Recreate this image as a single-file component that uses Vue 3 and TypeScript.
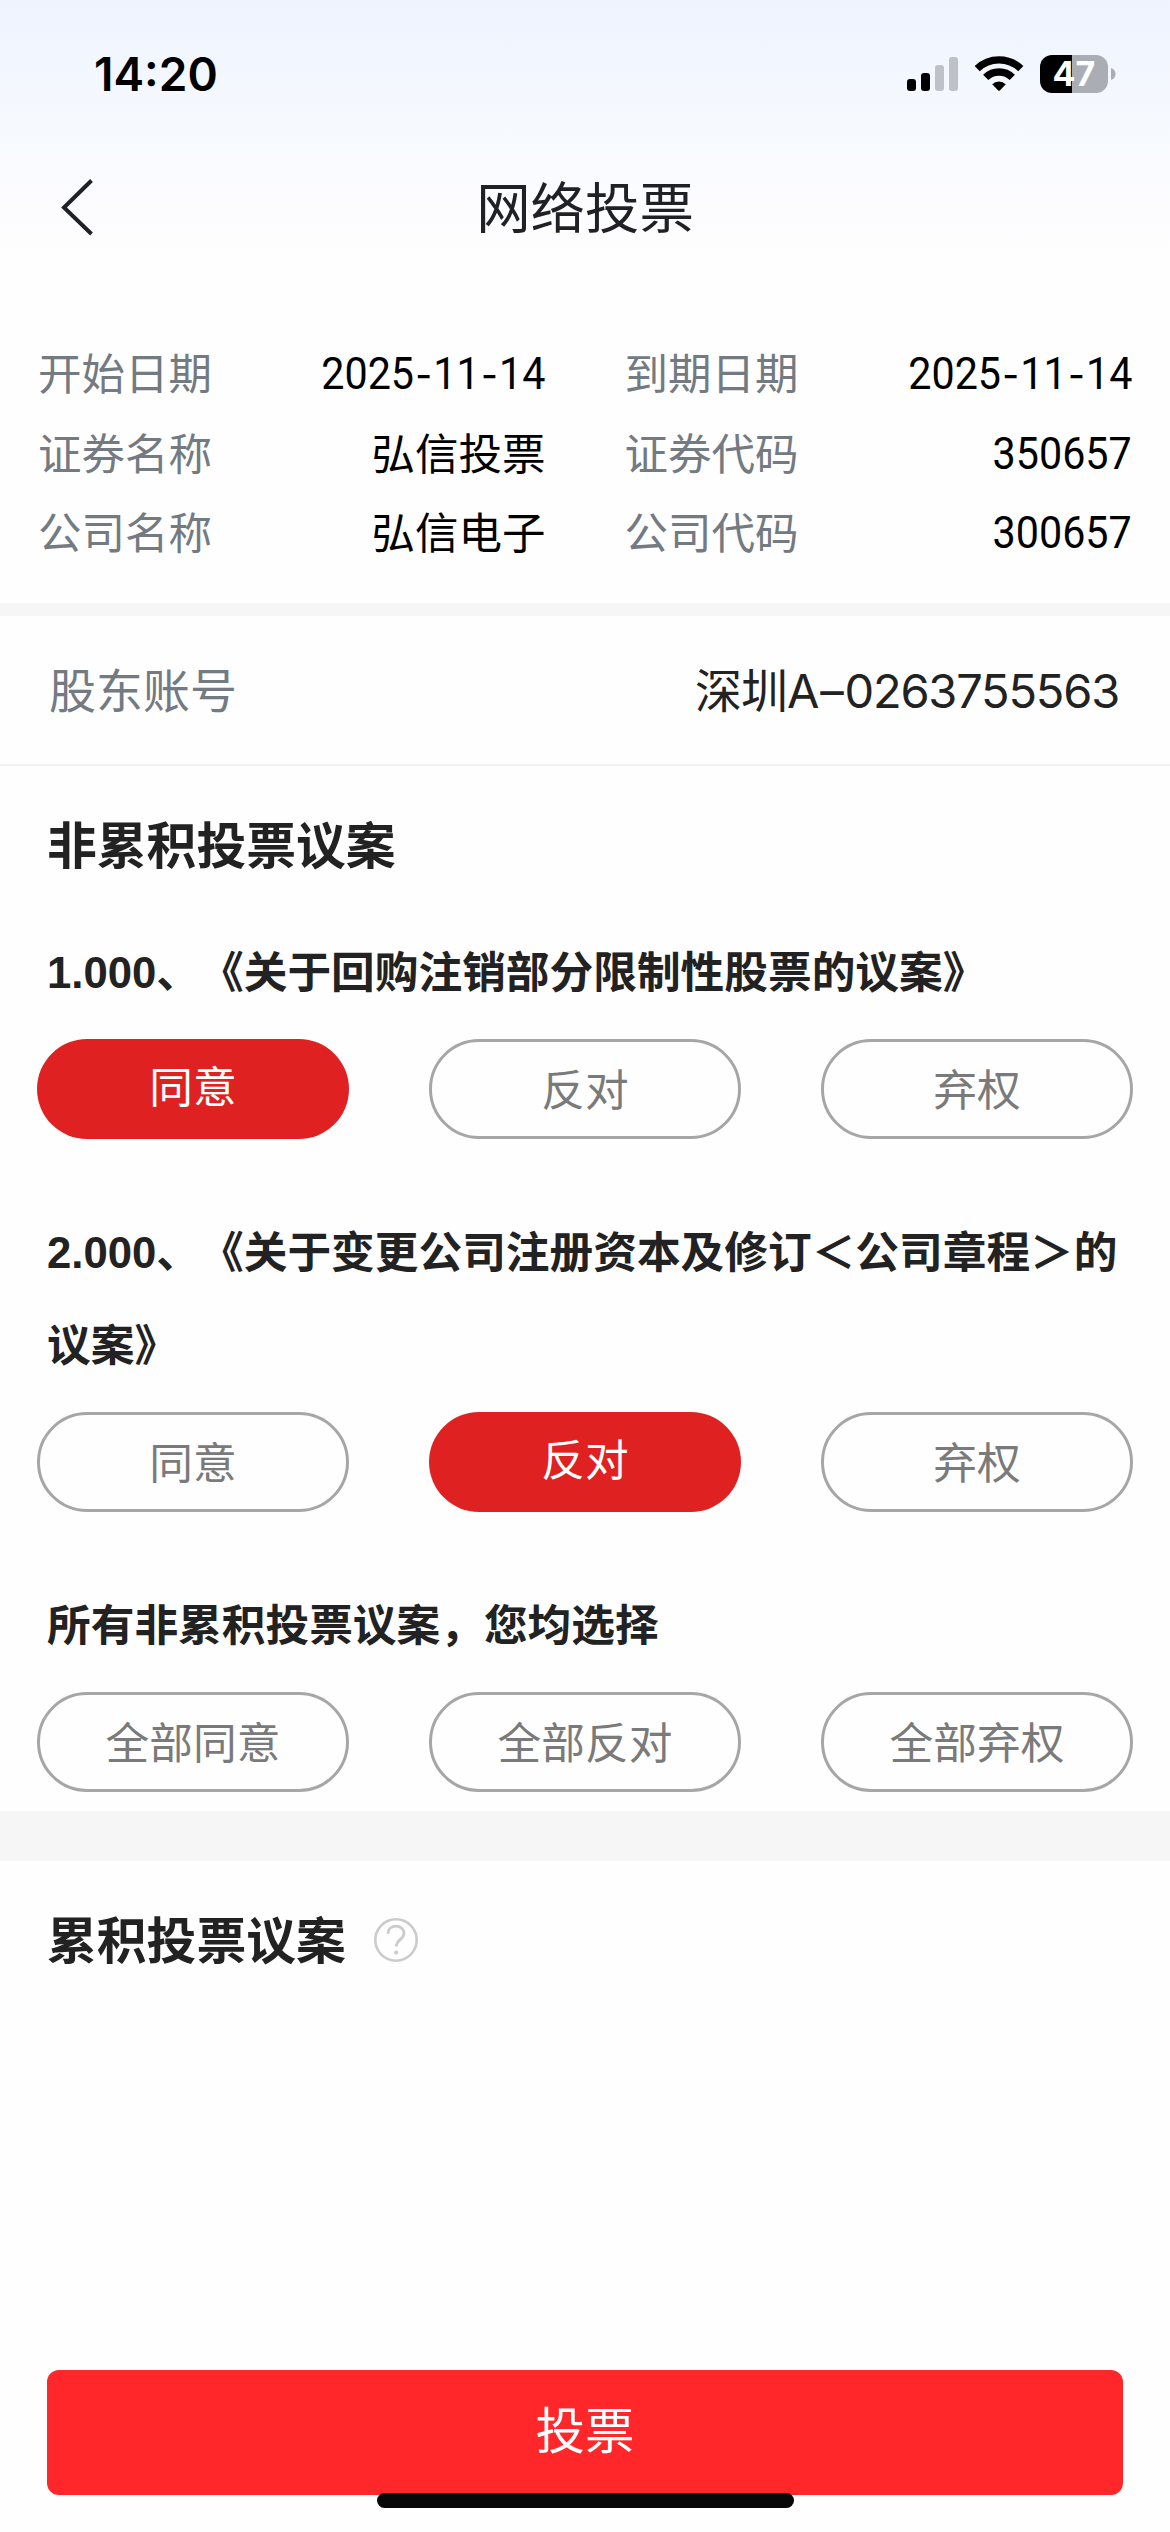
<script setup lang="ts">
import { reactive } from 'vue'

interface InfoItem {
  label: string
  value: string
  numeric?: boolean
}

interface Proposal {
  id: number
  title: string
  choice: string
}

const infoItems: InfoItem[] = [
  { label: '开始日期', value: '2025-11-14', numeric: true },
  { label: '到期日期', value: '2025-11-14', numeric: true },
  { label: '证券名称', value: '弘信投票' },
  { label: '证券代码', value: '350657', numeric: true },
  { label: '公司名称', value: '弘信电子' },
  { label: '公司代码', value: '300657', numeric: true },
]

const choices: string[] = ['同意', '反对', '弃权']

const proposals = reactive<Proposal[]>([
  { id: 1, title: '1.000、《关于回购注销部分限制性股票的议案》', choice: '同意' },
  { id: 2, title: '2.000、《关于变更公司注册资本及修订＜公司章程＞的议案》', choice: '反对' },
])

function pickAll(choice: string): void {
  proposals.forEach((p) => (p.choice = choice))
}
</script>

<template>
  <div class="page">
    <header class="top">
      <div class="status">
        <span class="time">14:20</span>
        <div class="indicators">
          <svg class="signal" width="51" height="38" viewBox="0 0 51 38">
            <rect x="0" y="24" width="9" height="12" rx="3" fill="#000" />
            <rect x="14" y="18" width="9" height="18" rx="3" fill="#000" />
            <rect x="28" y="10" width="9" height="26" rx="3" fill="#bfc1c8" />
            <rect x="42" y="2" width="9" height="34" rx="3" fill="#bfc1c8" />
          </svg>
          <svg class="wifi" width="50" height="38" viewBox="0 0 50 38">
            <path d="M3.2 13.6A31.5 31.5 0 0 1 46.8 13.6" fill="none" stroke="#000" stroke-width="7.4" />
            <path d="M11.7 22.4A19 19 0 0 1 38.3 22.4" fill="none" stroke="#000" stroke-width="7.4" />
            <path d="M18.2 29.2A10 10 0 0 1 31.8 29.2L25.8 35.4Q25 36.2 24.2 35.4Z" fill="#000" />
          </svg>
          <div class="battery"><span>47</span></div>
          <svg class="cap" width="5" height="12" viewBox="0 0 5 12">
            <path d="M0 0Q4.5 1.6 4.5 6T0 12Z" fill="#abadb5" />
          </svg>
        </div>
      </div>
      <div class="nav">
        <svg class="back" width="36" height="60" viewBox="0 0 36 60">
          <path d="M32.5 3.5L5 30.5L32.5 57" fill="none" stroke="#202126" stroke-width="4" />
        </svg>
        <h1>网络投票</h1>
      </div>
    </header>

    <section class="info">
      <div v-for="item in infoItems" :key="item.label" class="info-item">
        <span class="info-label">{{ item.label }}</span>
        <span v-if="item.numeric" class="info-number">
          <template v-for="(part, i) in item.value.split('-')" :key="i"><i v-if="i > 0">-</i>{{ part }}</template>
        </span>
        <span v-else class="info-value">{{ item.value }}</span>
      </div>
    </section>

    <section class="account">
      <span class="account-label">股东账号</span>
      <span class="account-value"><span class="market">深圳</span><span class="dash">A–</span><span class="account-number">0263755563</span></span>
    </section>

    <section class="votes">
      <h2>非累积投票议案</h2>
      <div v-for="p in proposals" :key="p.id" class="proposal">
        <h3>{{ p.title }}</h3>
        <div class="options">
          <button
            v-for="c in choices"
            :key="c"
            type="button"
            :class="{ active: p.choice === c }"
            @click="p.choice = c"
          >{{ c }}</button>
        </div>
      </div>
      <div class="proposal">
        <h3>所有非累积投票议案，您均选择</h3>
        <div class="options">
          <button v-for="c in choices" :key="c" type="button" @click="pickAll(c)">全部{{ c }}</button>
        </div>
      </div>
    </section>

    <section class="cumulative">
      <h2>累积投票议案</h2>
      <svg class="help" width="44" height="44" viewBox="0 0 44 44" fill="none" stroke="#cbcbcb">
        <circle cx="22" cy="22" r="20.7" stroke-width="2.6" />
        <path d="M14 15.8C14 11 17.6 8.2 22 8.2C26.6 8.2 30 11.2 30 15.2C30 21.4 22.3 21.4 22.3 28.5" stroke-width="2.8" />
        <circle cx="22.2" cy="34.6" r="2.1" fill="#cbcbcb" stroke="none" />
      </svg>
    </section>

    <footer class="footer">
      <button type="button" class="submit">投票</button>
      <div class="home-bar"></div>
    </footer>
  </div>
</template>

<style>
body {
  margin: 0;
  background: #fefefe;
}
</style>

<style scoped>
.page {
  width: 1170px;
  height: 2532px;
  display: flex;
  flex-direction: column;
  overflow: hidden;
  background: #fefefe;
  color: #222;
  font-family: 'Noto Sans CJK SC', sans-serif;
  text-spacing-trim: space-all;
}

h1,
h2,
h3 {
  margin: 0;
}

button {
  padding: 0;
  font-family: inherit;
  box-sizing: border-box;
}

.top {
  height: 323px;
  background: linear-gradient(#eff3fe 0, #f2f6fe 60px, #f7faff 140px, #fcfcff 200px, #fefefe 270px);
}

.status {
  height: 148px;
  display: flex;
  justify-content: space-between;
  box-sizing: border-box;
  padding: 55px 54px 0 94px;
}

.time {
  font: 600 46px/38px Inter, sans-serif;
  color: #000;
}

.indicators {
  display: flex;
  height: 38px;
  align-items: center;
}

.wifi {
  margin-left: 16px;
}

.battery {
  width: 68px;
  height: 38px;
  margin-left: 16px;
  border-radius: 12px;
  background: linear-gradient(90deg, #000 32px, #abadb5 32px);
  color: #fff;
  font: 700 34px/38px Inter, sans-serif;
  text-align: center;
}

.cap {
  margin-left: 3px;
}

.nav {
  height: 118px;
  display: grid;
  grid-template-columns: 150px 1fr 150px;
  align-items: center;
}

.back {
  margin-left: 59px;
}

h1 {
  font-size: 54.4px;
  line-height: 78px;
  font-weight: 400;
  text-align: center;
  color: #202126;
  margin-top: -5px;
}

.info {
  height: 280px;
  box-sizing: border-box;
  padding: 9px 38px 0;
  display: grid;
  grid-template-columns: 1fr 1fr;
  grid-auto-rows: 79.5px;
  column-gap: 79px;
  font-size: 43.5px;
  line-height: 79.5px;
}

.info-item {
  display: flex;
  justify-content: space-between;
}

.info-label,
.account-label {
  color: #737a81;
}

.info-value {
  color: #000;
}

.info-number {
  padding-top: 2px;
  font-family: Roboto, sans-serif;
  font-size: 45px;
  color: #000;
  transform: scaleX(0.917);
  transform-origin: right center;
}

.info-number i {
  display: inline-block;
  width: 21px;
  text-align: center;
  font: 400 40px/40px Inter, sans-serif;
}

.account {
  box-sizing: border-box;
  border-top: 13px solid #f6f6f6;
  border-bottom: 2px solid #f2f2f2;
  height: 163px;
  padding: 0 51px 0 49px;
  display: flex;
  justify-content: space-between;
  font-size: 47px;
  line-height: 144px;
}

.account-value {
  padding-top: 3px;
  font-family: Inter, 'Noto Sans CJK SC', sans-serif;
}

.market {
  letter-spacing: -1px;
}

.dash {
  letter-spacing: 0.8px;
}

.account-number {
  letter-spacing: -1.2px;
}

.votes {
  height: 1045px;
  box-sizing: border-box;
}

h2 {
  padding-left: 47px;
  font-size: 49.8px;
  line-height: 100px;
  font-weight: 700;
}

.votes h2 {
  padding-top: 26px;
}

.proposal {
  margin-bottom: 67px;
}

.votes h2 + .proposal {
  padding-top: 34px;
}

h3 {
  padding: 0 47px;
  font-family: 'Liberation Sans', 'Noto Sans CJK SC', sans-serif;
  font-size: 43.7px;
  line-height: 93px;
  font-weight: 700;
}

.options {
  display: flex;
  justify-content: space-between;
  padding: 0 37px;
  margin-top: 20px;
}

.options button {
  width: 312px;
  height: 100px;
  border: 3px solid #a6a6a6;
  border-radius: 50px;
  padding-bottom: 4px;
  background: #fefefe;
  color: #7a7a7a;
  font-size: 43.7px;
  line-height: 90px;
}

.options button.active {
  border: 0;
  padding-bottom: 10px;
  background: #df2122;
  color: #fff;
}

.cumulative {
  border-top: 50px solid #f6f6f6;
  display: flex;
  align-items: center;
  height: 158px;
}

.cumulative h2 {
  margin-top: -6px;
}

.help {
  margin-left: 28px;
}

.footer {
  position: relative;
  margin-top: auto;
  height: 162px;
  padding: 0 47px;
}

.submit {
  width: 100%;
  height: 125px;
  border: 0;
  border-radius: 12px;
  padding-bottom: 10px;
  background: #ff272a;
  color: #fff;
  font-size: 49.5px;
}

.home-bar {
  position: absolute;
  left: 377px;
  top: 123px;
  width: 417px;
  height: 15px;
  border-radius: 8px;
  background: #080808;
}
</style>
